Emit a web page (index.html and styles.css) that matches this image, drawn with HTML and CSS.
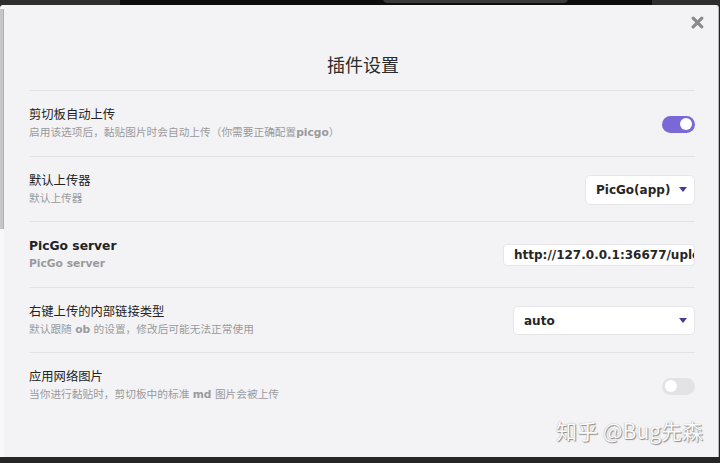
FILE: index.html
```html
<!DOCTYPE html>
<html lang="zh-CN">
<head>
<meta charset="utf-8">
<title>插件设置</title>
<link rel="stylesheet" href="styles.css">
</head>
<body>
<div class="topbar">
  <div class="tb-left"></div>
  <div class="tb-mid"><div class="tb-pill"></div></div>
  <div class="tb-right"></div>
</div>
<div class="modal">
  <div class="scrollbar"></div>
  <button class="close" aria-label="关闭">
    <svg width="13" height="13" viewBox="0 0 13 13"><path d="M2.2 2.2 L10.8 10.8 M10.8 2.2 L2.2 10.8" stroke="#8a8a8a" stroke-width="3.2" stroke-linecap="round"/></svg>
  </button>
  <div class="content">
    <div class="header"><h1 class="title">插件设置</h1></div>
    <div class="row">
      <div class="info">
        <div class="name">剪切板自动上传</div>
        <div class="desc">启用该选项后，黏贴图片时会自动上传（你需要正确配置<b>picgo</b>）</div>
      </div>
      <div class="toggle on"><span class="knob"></span></div>
    </div>
    <div class="row">
      <div class="info">
        <div class="name">默认上传器</div>
        <div class="desc">默认上传器</div>
      </div>
      <div class="select sel-app"><span>PicGo(app)</span><i class="caret"></i></div>
    </div>
    <div class="row">
      <div class="info">
        <div class="name"><b>PicGo server</b></div>
        <div class="desc"><b>PicGo server</b></div>
      </div>
      <input class="text-input" type="text" value="http://127.0.0.1:36677/upload">
    </div>
    <div class="row">
      <div class="info">
        <div class="name">右键上传的内部链接类型</div>
        <div class="desc">默认跟随 <b>ob</b> 的设置，修改后可能无法正常使用</div>
      </div>
      <div class="select sel-auto"><span>auto</span><i class="caret"></i></div>
    </div>
    <div class="row last">
      <div class="info">
        <div class="name">应用网络图片</div>
        <div class="desc">当你进行黏贴时，剪切板中的标准 <b>md</b> 图片会被上传</div>
      </div>
      <div class="toggle"><span class="knob"></span></div>
    </div>
  </div>
  <div class="watermark">知乎 @Bug先森</div>
</div>
<div class="bottombar"></div>
</body>
</html>
```
FILE: styles.css
```css
* { box-sizing: border-box; }
html, body {
  margin: 0;
  padding: 0;
  background: #222;
  width: 720px;
  height: 463px;
  overflow: hidden;
  font-family: "DejaVu Sans", "Noto Sans CJK SC", sans-serif;
}
.topbar {
  height: 5px;
  display: flex;
}
.tb-left { width: 120px; background: #2e2e2e; }
.tb-mid { flex: 1; background: #0d0d0d; position: relative; }
.tb-pill {
  position: absolute;
  left: 263px;
  width: 185px;
  top: -6px;
  height: 9px;
  border-radius: 5px;
  background: #3a3a3a;
}
.tb-right { width: 68px; background: #2e2e2e; }

.modal {
  position: relative;
  width: 719px;
  height: 452px;
  background: #f3f3f5;
  border-right: 1px solid #b8b8b8;
  border-left: 4px solid #f8f8f9;
  border-radius: 3px 3px 0 0;
}
.scrollbar {
  position: absolute;
  left: -4px;
  top: 4px;
  width: 4px;
  height: 220px;
  background: #c6c6c6;
  border-right: 1px solid #b0b0b0;
}
.close {
  position: absolute;
  right: 13px;
  top: 10px;
  width: 15px;
  height: 15px;
  padding: 1px;
  border: 0;
  background: transparent;
  display: flex;
  align-items: center;
  justify-content: center;
}
.content {
  padding: 0 23px 0 25px;
}
.header {
  border-bottom: 1px solid #e2e2e4;
  padding: 47px 0 14px;
  text-align: center;
}
.title {
  margin: 0 0 0 2px;
  font-family: "Noto Sans CJK SC", sans-serif;
  font-size: 18px;
  line-height: 24px;
  font-weight: 400;
  color: #2b2b2b;
}
.row {
  display: flex;
  align-items: center;
  justify-content: space-between;
  padding: 15px 0 13.5px;
  border-bottom: 1px solid #e2e2e4;
}
.row.last { border-bottom: 0; }
.name {
  font-size: 12.3px;
  line-height: 18px;
  color: #222;
}
.desc {
  font-size: 10.7px;
  line-height: 18px;
  color: #9a9a9c;
}
.name b, .desc b { font-weight: 700; }

.toggle {
  width: 33px;
  height: 17px;
  border-radius: 9px;
  background: #e3e3e5;
  padding: 2.5px 3px;
  display: flex;
  justify-content: flex-start;
}
.toggle.on {
  background: #7a68d7;
  justify-content: flex-end;
}
.knob {
  width: 12px;
  height: 12px;
  border-radius: 50%;
  background: #fff;
}

.select {
  display: flex;
  align-items: center;
  justify-content: space-between;
  background: #fff;
  border: 1px solid #e6e6e8;
  border-radius: 5px;
  padding: 0 7px 0 10px;
  font-size: 12px;
  font-weight: 700;
  color: #262626;
}
.sel-app { width: 110px; height: 30px; }
.sel-auto { width: 182px; height: 29px; }
.caret {
  width: 0;
  height: 0;
  border-left: 4px solid transparent;
  border-right: 4px solid transparent;
  border-top: 5px solid #483c98;
}
.text-input {
  width: 192px;
  height: 22px;
  background: #fff;
  border: 1px solid #e6e6e8;
  border-radius: 4px;
  padding: 0 0 0 10px;
  font-family: "DejaVu Sans", sans-serif;
  font-size: 12px;
  font-weight: 700;
  color: #262626;
  outline: none;
}
.watermark {
  position: absolute;
  right: 15px;
  bottom: 15px;
  font-family: "Noto Sans CJK SC", sans-serif;
  font-size: 21px;
  line-height: 24px;
  color: #fbfbfb;
  text-shadow: 1px 1px 1px #8c8c8c, 0 0 1px #9a9a9a;
}
.bottombar {
  height: 6px;
  background: #262626;
}
```
